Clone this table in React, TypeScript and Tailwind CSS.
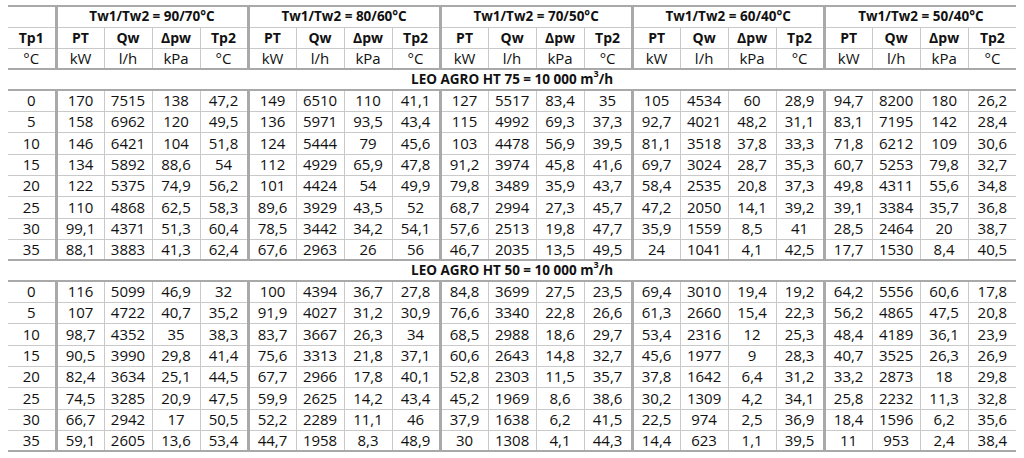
const groups = ['90/70°C', '80/60°C', '70/50°C', '60/40°C', '50/40°C']

const ht75: string[][] = [
  ['0', '170', '7515', '138', '47,2', '149', '6510', '110', '41,1', '127', '5517', '83,4', '35', '105', '4534', '60', '28,9', '94,7', '8200', '180', '26,2'],
  ['5', '158', '6962', '120', '49,5', '136', '5971', '93,5', '43,4', '115', '4992', '69,3', '37,3', '92,7', '4021', '48,2', '31,1', '83,1', '7195', '142', '28,4'],
  ['10', '146', '6421', '104', '51,8', '124', '5444', '79', '45,6', '103', '4478', '56,9', '39,5', '81,1', '3518', '37,8', '33,3', '71,8', '6212', '109', '30,6'],
  ['15', '134', '5892', '88,6', '54', '112', '4929', '65,9', '47,8', '91,2', '3974', '45,8', '41,6', '69,7', '3024', '28,7', '35,3', '60,7', '5253', '79,8', '32,7'],
  ['20', '122', '5375', '74,9', '56,2', '101', '4424', '54', '49,9', '79,8', '3489', '35,9', '43,7', '58,4', '2535', '20,8', '37,3', '49,8', '4311', '55,6', '34,8'],
  ['25', '110', '4868', '62,5', '58,3', '89,6', '3929', '43,5', '52', '68,7', '2994', '27,3', '45,7', '47,2', '2050', '14,1', '39,2', '39,1', '3384', '35,7', '36,8'],
  ['30', '99,1', '4371', '51,3', '60,4', '78,5', '3442', '34,2', '54,1', '57,6', '2513', '19,8', '47,7', '35,9', '1559', '8,5', '41', '28,5', '2464', '20', '38,7'],
  ['35', '88,1', '3883', '41,3', '62,4', '67,6', '2963', '26', '56', '46,7', '2035', '13,5', '49,5', '24', '1041', '4,1', '42,5', '17,7', '1530', '8,4', '40,5'],
]

const ht50: string[][] = [
  ['0', '116', '5099', '46,9', '32', '100', '4394', '36,7', '27,8', '84,8', '3699', '27,5', '23,5', '69,4', '3010', '19,4', '19,2', '64,2', '5556', '60,6', '17,8'],
  ['5', '107', '4722', '40,7', '35,2', '91,9', '4027', '31,2', '30,9', '76,6', '3340', '22,8', '26,6', '61,3', '2660', '15,4', '22,3', '56,2', '4865', '47,5', '20,8'],
  ['10', '98,7', '4352', '35', '38,3', '83,7', '3667', '26,3', '34', '68,5', '2988', '18,6', '29,7', '53,4', '2316', '12', '25,3', '48,4', '4189', '36,1', '23,9'],
  ['15', '90,5', '3990', '29,8', '41,4', '75,6', '3313', '21,8', '37,1', '60,6', '2643', '14,8', '32,7', '45,6', '1977', '9', '28,3', '40,7', '3525', '26,3', '26,9'],
  ['20', '82,4', '3634', '25,1', '44,5', '67,7', '2966', '17,8', '40,1', '52,8', '2303', '11,5', '35,7', '37,8', '1642', '6,4', '31,2', '33,2', '2873', '18', '29,8'],
  ['25', '74,5', '3285', '20,9', '47,5', '59,9', '2625', '14,2', '43,4', '45,2', '1969', '8,6', '38,6', '30,2', '1309', '4,2', '34,1', '25,8', '2232', '11,3', '32,8'],
  ['30', '66,7', '2942', '17', '50,5', '52,2', '2289', '11,1', '46', '37,9', '1638', '6,2', '41,5', '22,5', '974', '2,5', '36,9', '18,4', '1596', '6,2', '35,6'],
  ['35', '59,1', '2605', '13,6', '53,4', '44,7', '1958', '8,3', '48,9', '30', '1308', '4,1', '44,3', '14,4', '623', '1,1', '39,5', '11', '953', '2,4', '38,4'],
]

const labels = ['PT', 'Qw', 'Δpw', 'Tp2']
const units = ['kW', 'l/h', 'kPa', '°C']

// thick rule where a temperature group starts, thin rule inside a group
function edge(i: number) {
  if (i === 0) return ''
  return (i - 1) % 4 === 0 ? 'border-l-[3px] border-l-[#a9a9a9]' : 'border-l border-l-[#c9c9c9]'
}

export default function App() {
  return (
    <div className="bg-white w-[1024px] h-[458px] pl-2 pt-[5px] text-[#111111]" style={{ fontFamily: '"Open Sans", sans-serif' }}>
      <table className="table-fixed border-collapse w-[1008px] text-[15px] leading-none text-center">
        <colgroup>
          {Array.from({ length: 21 }, (_, i) => (
            <col key={i} className="w-[48px]" />
          ))}
        </colgroup>
        <thead>
          <tr className="h-[21px] border-t-2 border-t-[#a9a9a9] border-b border-b-[#c9c9c9]">
            <th />
            {groups.map((g) => (
              <th key={g} colSpan={4} className="font-bold text-[13.5px] border-l-[3px] border-l-[#a9a9a9]">
                Tw1/Tw2 = {g}
              </th>
            ))}
          </tr>
          <tr className="h-[21px] border-b border-b-[#c9c9c9]">
            <th className="font-bold text-[14px]">Tp1</th>
            {groups.map((g) =>
              labels.map((l, j) => (
                <th key={g + l} className={`font-bold text-[14px] ${edge(j + 1)}`}>{l}</th>
              ))
            )}
          </tr>
          <tr className="h-[21px] border-b-2 border-b-[#a9a9a9]">
            <th className="font-normal">°C</th>
            {groups.map((g) =>
              units.map((u, j) => (
                <th key={g + u} className={`font-normal ${edge(j + 1)}`}>{u}</th>
              ))
            )}
          </tr>
        </thead>
        <Section title="LEO AGRO HT 75" rows={ht75} />
        <Section title="LEO AGRO HT 50" rows={ht50} />
      </table>
    </div>
  )
}

function Section({ title, rows }: { title: string; rows: string[][] }) {
  return (
    <tbody>
      <tr className="h-[21px] border-b-2 border-b-[#a9a9a9]">
        <td colSpan={21} className="font-bold text-[13.5px]">
          {title} = 10 000 m<sup className="text-[9px] relative -top-[1px] align-super">3</sup>/h
        </td>
      </tr>
      {rows.map((r, ri) => (
        <tr
          key={r[0]}
          className={`${ri % 3 === 2 ? 'h-[22px]' : 'h-[21px]'} ${ri === rows.length - 1 ? 'border-b-2 border-b-[#a9a9a9]' : 'border-b border-b-[#c9c9c9]'}`}
        >
          {r.map((v, i) => (
            <td key={i} className={edge(i)}>{v}</td>
          ))}
        </tr>
      ))}
    </tbody>
  )
}
